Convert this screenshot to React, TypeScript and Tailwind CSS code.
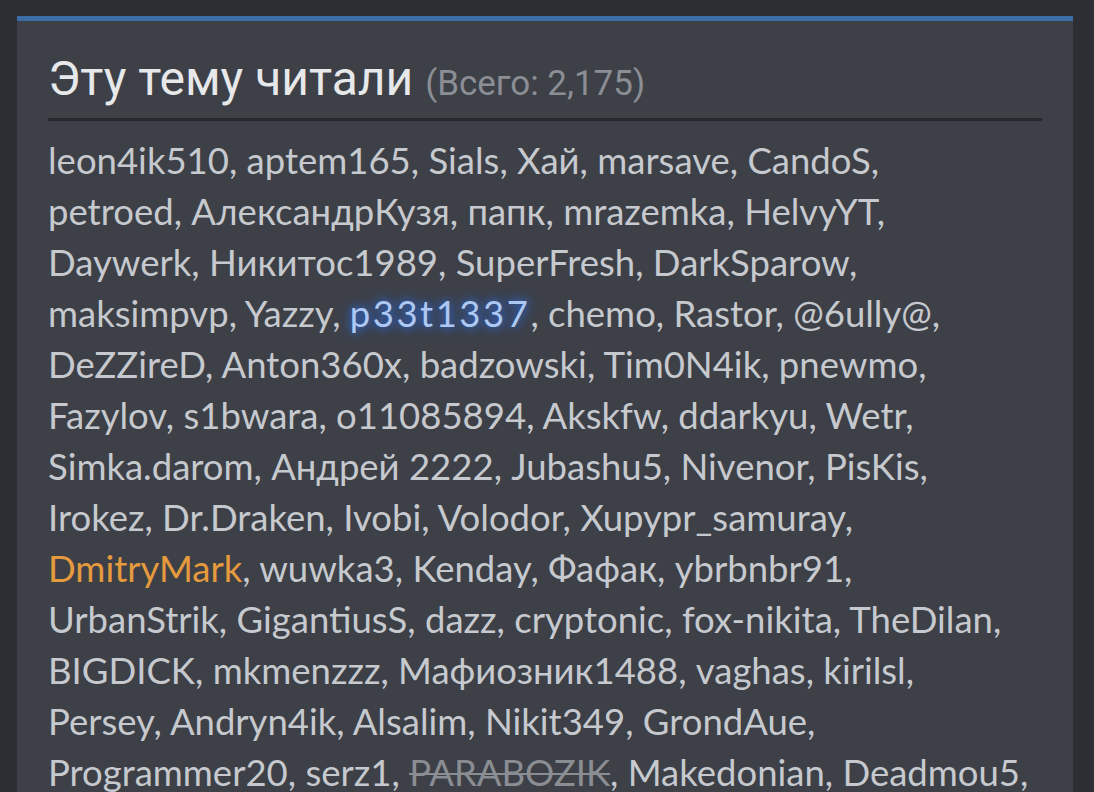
import React from 'react'

type Name = { text: string; kind?: 'orange' | 'glow' | 'struck' }

const lines: Name[][] = [
  ['leon4ik510', 'aptem165', 'Sials', 'Хай', 'marsave', 'CandoS'],
  ['petroed', 'АлександрКузя', 'папк', 'mrazemka', 'HelvyYT'],
  ['Daywerk', 'Никитос1989', 'SuperFresh', 'DarkSparow'],
  ['maksimpvp', 'Yazzy', '#glow:p33t1337', 'chemo', 'Rastor', '@6ully@'],
  ['DeZZireD', 'Anton360x', 'badzowski', 'Tim0N4ik', 'pnewmo'],
  ['Fazylov', 's1bwara', 'o11085894', 'Akskfw', 'ddarkyu', 'Wetr'],
  ['Simka.darom', 'Андрей 2222', 'Jubashu5', 'Nivenor', 'PisKis'],
  ['Irokez', 'Dr.Draken', 'Ivobi', 'Volodor', 'Xupypr_samuray'],
  ['#orange:DmitryMark', 'wuwka3', 'Kenday', 'Фафак', 'ybrbnbr91'],
  ['UrbanStrik', 'GigantiusS', 'dazz', 'cryptonic', 'fox-nikita', 'TheDilan'],
  ['BIGDICK', 'mkmenzzz', 'Мафиозник1488', 'vaghas', 'kirilsl'],
  ['Persey', 'Andryn4ik', 'Alsalim', 'Nikit349', 'GrondAue'],
  ['Programmer20', 'serz1', '#struck:PARABOZIK', 'Makedonian', 'Deadmou5'],
].map((row) =>
  row.map((s) => {
    if (s.startsWith('#')) {
      const [k, t] = s.slice(1).split(':')
      return { text: t, kind: k as Name['kind'] }
    }
    return { text: s }
  })
)

function UserName({ n }: { n: Name }) {
  if (n.kind === 'orange') return <a className="text-[#e69a3e]">{n.text}</a>
  if (n.kind === 'glow')
    return (
      <a className="text-[#adc8f2] tracking-[2.5px] [text-shadow:0_0_8px_#2f64c9,0_0_14px_#2f64c9]">{n.text}</a>
    )
  if (n.kind === 'struck') return <a className="text-[#8a8d92] line-through decoration-2">{n.text}</a>
  return <a>{n.text}</a>
}

export default function App() {
  return (
    <div className="min-h-screen bg-[#2c2e33] pt-4 pl-[17px] pr-[21px]">
      <div className="bg-[#3d4047] border-t-[5px] border-[#3b6da6] px-[31px] pt-[30px] pb-8">
        <h2 className="font-['Roboto',sans-serif] text-[48px] leading-[56px] text-[#e7e8ea] pb-[6px] border-b-[3px] border-[#27292d]">
          Эту тему читали{' '}
          <span className="text-[35px] text-[#8b8e94]">(Всего: 2,175)</span>
        </h2>
        <div className="mt-[14px] font-['Lato',sans-serif] text-[36.5px] leading-[51px] text-[#c6c9ce]">
          {lines.map((row, i) => (
            <div key={i} className="whitespace-nowrap">
              {row.map((n, j) => (
                <React.Fragment key={j}>
                  <UserName n={n} />
                  {','}
                  {j < row.length - 1 ? ' ' : ''}
                </React.Fragment>
              ))}
            </div>
          ))}
        </div>
      </div>
    </div>
  )
}
